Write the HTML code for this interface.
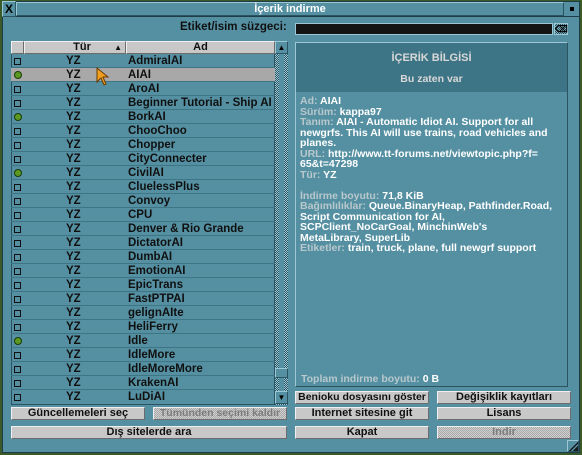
<!DOCTYPE html>
<html><head><meta charset="utf-8"><style>
*{margin:0;padding:0;box-sizing:border-box}
body{width:582px;height:455px;background:#3a5a2a;position:relative;overflow:hidden;font-family:"Liberation Sans",sans-serif;font-weight:bold;font-size:11px}
.a{position:absolute}
.win{left:2px;top:1px;width:578px;height:452px;background:#5590a2;border:1px solid #1f3d48}
.title{left:2px;top:1px;width:578px;height:16px;background:#5590a2;border:1px solid #1f3d48}
.bev{border-top:1px solid #9cc8d6;border-left:1px solid #9cc8d6;border-bottom:1px solid #2a5462;border-right:1px solid #2a5462}
.btn{background:#c8c8c8;border-top:1px solid #f0f0f0;border-left:1px solid #f0f0f0;border-bottom:1px solid #6c6c6c;border-right:1px solid #6c6c6c;text-align:center;color:#101010;line-height:11px;font-size:11px;white-space:nowrap;overflow:hidden}
.dis{background:repeating-conic-gradient(#a8a8a8 0 25%,#d0d0d0 0 50%) 0 0/2px 2px;color:#7c7c7c}
.row{left:11px;width:264px;height:14px;border-bottom:1px solid #3d7585;color:#101010;font-size:11.5px;line-height:14px}
.row .c{position:absolute;left:3px;top:4px;width:7px;height:7px;border:1px solid #101010}
.row .g{position:absolute;left:3px;top:3px;width:8px;height:8px;border-radius:50%;background:#5a9a20;border:1px solid #1c3a08}
.row .t{position:absolute;left:55px}
.row .n{position:absolute;left:117px}
.info{color:#fff;font-size:10.5px;line-height:10.5px}
.lb{color:#b8c8cc}
</style></head><body>
<div class="a win"></div>
<div class="a title"></div>
<div class="a btn" style="left:2px;top:1px;width:14px;height:16px;background:#5590a2;border-color:#9cc8d6 #2a5462 #2a5462 #9cc8d6;color:#000;font-size:12px;line-height:14px">X</div>
<div class="a" style="left:16px;top:2px;width:548px;height:14px;border:1px solid #9cc8d6;border-right-color:#2a5462;border-bottom-color:#2a5462;color:#fff;text-align:center;font-size:11px;line-height:12px">İçerik indirme</div>
<div class="a" style="left:566px;top:3px;width:12px;height:12px"><div class="a" style="left:4px;top:4px;width:4px;height:4px;background:#000"></div></div>

<div class="a" style="left:180px;top:21px;color:#101010;font-size:11.5px">Etiket/isim süzgeci:</div>
<div class="a" style="left:295px;top:23px;width:258px;height:12px;background:#141414;border:1px solid #9cc8d6"></div>
<div class="a" style="left:554px;top:23px;width:14px;height:12px;background:repeating-conic-gradient(#2a5462 0 25%,#7fb0c0 0 50%) 0 0/2px 2px;border:1px solid #9cc8d6;color:#000;font-size:9px;text-align:center;line-height:10px">⌫</div>

<div class="a" style="left:11px;top:41px;width:264px;height:364px;border:1px solid #2a5462;background:#5590a2"></div>
<div class="a btn" style="left:11px;top:41px;width:13px;height:13px"></div>
<div class="a btn" style="left:24px;top:41px;width:102px;height:13px;padding-left:14px">Tür <span style="position:absolute;right:3px;font-size:8px">▲</span></div>
<div class="a btn" style="left:126px;top:41px;width:149px;height:13px">Ad</div>
<div class="a" style="left:275px;top:41px;width:13px;height:364px;background:repeating-conic-gradient(#2a5462 0 25%,#9cc8d6 0 50%) 0 0/2px 2px"></div>
<div class="a" style="left:279px;top:54px;width:5px;height:340px;background:#5590a2"></div>
<div class="a bev" style="left:275px;top:41px;width:13px;height:13px;background:#5590a2;font-size:8px;text-align:center;line-height:11px;color:#000">▲</div>
<div class="a bev" style="left:275px;top:368px;width:13px;height:10px;background:#5590a2"></div>
<div class="a bev" style="left:275px;top:391px;width:13px;height:13px;background:#5590a2;font-size:8px;text-align:center;line-height:11px;color:#000">▼</div>

<div class="a row" style="top:54px"><i class="c"></i><span class="t">YZ</span><span class="n">AdmiralAI</span></div>
<div class="a row" style="top:68px;background:#a8a8a8"><i class="g"></i><span class="t">YZ</span><span class="n">AIAI</span></div>
<div class="a row" style="top:82px"><i class="c"></i><span class="t">YZ</span><span class="n">AroAI</span></div>
<div class="a row" style="top:96px"><i class="c"></i><span class="t">YZ</span><span class="n">Beginner Tutorial - Ship AI</span></div>
<div class="a row" style="top:110px"><i class="g"></i><span class="t">YZ</span><span class="n">BorkAI</span></div>
<div class="a row" style="top:124px"><i class="c"></i><span class="t">YZ</span><span class="n">ChooChoo</span></div>
<div class="a row" style="top:138px"><i class="c"></i><span class="t">YZ</span><span class="n">Chopper</span></div>
<div class="a row" style="top:152px"><i class="c"></i><span class="t">YZ</span><span class="n">CityConnecter</span></div>
<div class="a row" style="top:166px"><i class="g"></i><span class="t">YZ</span><span class="n">CivilAI</span></div>
<div class="a row" style="top:180px"><i class="c"></i><span class="t">YZ</span><span class="n">CluelessPlus</span></div>
<div class="a row" style="top:194px"><i class="c"></i><span class="t">YZ</span><span class="n">Convoy</span></div>
<div class="a row" style="top:208px"><i class="c"></i><span class="t">YZ</span><span class="n">CPU</span></div>
<div class="a row" style="top:222px"><i class="c"></i><span class="t">YZ</span><span class="n">Denver &amp; Rio Grande</span></div>
<div class="a row" style="top:236px"><i class="c"></i><span class="t">YZ</span><span class="n">DictatorAI</span></div>
<div class="a row" style="top:250px"><i class="c"></i><span class="t">YZ</span><span class="n">DumbAI</span></div>
<div class="a row" style="top:264px"><i class="c"></i><span class="t">YZ</span><span class="n">EmotionAI</span></div>
<div class="a row" style="top:278px"><i class="c"></i><span class="t">YZ</span><span class="n">EpicTrans</span></div>
<div class="a row" style="top:292px"><i class="c"></i><span class="t">YZ</span><span class="n">FastPTPAI</span></div>
<div class="a row" style="top:306px"><i class="c"></i><span class="t">YZ</span><span class="n">gelignAIte</span></div>
<div class="a row" style="top:320px"><i class="c"></i><span class="t">YZ</span><span class="n">HeliFerry</span></div>
<div class="a row" style="top:334px"><i class="g"></i><span class="t">YZ</span><span class="n">Idle</span></div>
<div class="a row" style="top:348px"><i class="c"></i><span class="t">YZ</span><span class="n">IdleMore</span></div>
<div class="a row" style="top:362px"><i class="c"></i><span class="t">YZ</span><span class="n">IdleMoreMore</span></div>
<div class="a row" style="top:376px"><i class="c"></i><span class="t">YZ</span><span class="n">KrakenAI</span></div>
<div class="a row" style="top:390px;border-bottom:none"><i class="c"></i><span class="t">YZ</span><span class="n">LuDiAI</span></div>
<svg class="a" style="left:96px;top:67px" width="14" height="20"><path d="M1 1 L1 15 L5 11 L8 18 L10 17 L7 10 L12 10 Z" fill="#f0a020" stroke="#6a3a00"/></svg>

<div class="a" style="left:295px;top:42px;width:273px;height:345px;background:#5590a2;border:1px solid #9cc8d6;border-right-color:#2a5462;border-bottom-color:#2a5462"></div>
<div class="a" style="left:296px;top:43px;width:271px;height:49px;background:#3e7586"></div>
<div class="a" style="left:296px;top:52px;width:271px;text-align:center;color:#d8d8d8;font-size:11px">İÇERİK BİLGİSİ</div>
<div class="a" style="left:296px;top:73px;width:271px;text-align:center;color:#d8d8d8;font-size:10.5px">Bu zaten var</div>
<div class="a info" style="left:300px;top:96px;width:262px">
<span class="lb">Ad:</span> AIAI<br><span class="lb">Sürüm:</span> kappa97<br><span class="lb">Tanım:</span> AIAI - Automatic Idiot AI. Support for all newgrfs. This AI will use trains, road vehicles and planes.<br><span class="lb">URL:</span> http://www.tt-forums.net/viewtopic.php?f=<br>65&amp;t=47298<br><span class="lb">Tür:</span> YZ<br><br><span class="lb">İndirme boyutu:</span> 71,8 KiB<br><span class="lb">Bağımlılıklar:</span> Queue.BinaryHeap, Pathfinder.Road, Script Communication for AI,<br>SCPClient_NoCarGoal, MinchinWeb's<br>MetaLibrary, SuperLib<br><span class="lb">Etiketler:</span> train, truck, plane, full newgrf support</div>
<div class="a info" style="left:301px;top:374px"><span class="lb">Toplam indirme boyutu:</span> 0 B</div>

<div class="a btn" style="left:295px;top:391px;width:134px;height:13px;font-size:10.5px">Benioku dosyasını göster</div>
<div class="a btn" style="left:437px;top:391px;width:134px;height:13px">Değişiklik kayıtları</div>
<div class="a btn" style="left:11px;top:407px;width:134px;height:13px">Güncellemeleri seç</div>
<div class="a btn dis" style="left:153px;top:407px;width:134px;height:13px;font-size:10.5px">Tümünden seçimi kaldır</div>
<div class="a btn" style="left:295px;top:407px;width:134px;height:13px">İnternet sitesine git</div>
<div class="a btn" style="left:437px;top:407px;width:134px;height:13px">Lisans</div>
<div class="a btn" style="left:11px;top:426px;width:276px;height:13px">Dış sitelerde ara</div>
<div class="a btn" style="left:295px;top:426px;width:134px;height:13px">Kapat</div>
<div class="a btn dis" style="left:437px;top:426px;width:134px;height:13px">İndir</div>
<div class="a" style="left:567px;top:440px;width:12px;height:12px;border:1px solid #9cc8d6;border-right-color:#2a5462;border-bottom-color:#2a5462;background:linear-gradient(135deg,transparent 55%,#1a1a1a 55%,#1a1a1a 65%,transparent 65%,transparent 75%,#1a1a1a 75%)"></div>
</body></html>
